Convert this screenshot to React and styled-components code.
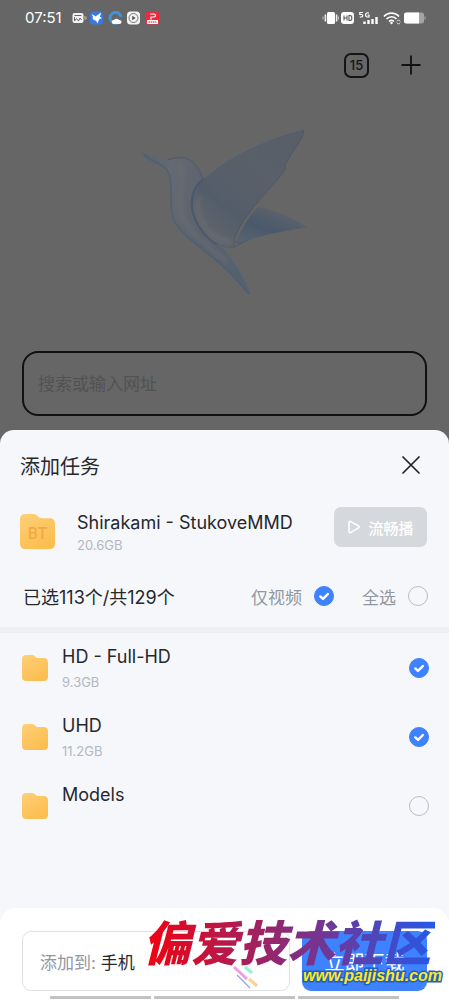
import React, { useState } from 'react';
import styled, { createGlobalStyle } from 'styled-components';

const files = [
  { name: 'HD - Full-HD', size: '9.3GB', checked: true },
  { name: 'UHD', size: '11.2GB', checked: true },
  { name: 'Models', size: '', checked: false },
];

const FolderIcon = (props) => {
  return (
    <FolderSvg $size={props.size} viewBox="0 0 36 36" aria-hidden="true">
      <defs>
        <linearGradient id={props.id} x1="0" y1="0" x2="0.6" y2="1">
          <stop offset="0" stopColor="#ffcf78" />
          <stop offset="1" stopColor="#fcbe50" />
        </linearGradient>
      </defs>
      <path
        d="M6 0h8c2 0 3 1 4.500 2.300C20 3.700 21 4.300 23 4.300h7c4 0 6 2 6 6V30c0 4-2 6-6 6H6c-4 0-6-2-6-6V6c0-4 2-6 6-6z"
        fill={`url(#${props.id})`}
      />
    </FolderSvg>
  );
};

const RoundCheck = (props) => {
  const [checked, setChecked] = useState(props.defaultChecked);
  return (
    <CheckWrap>
      <CheckInput
        type="checkbox"
        id={props.id}
        checked={checked}
        aria-label={props.label}
        onChange={() => setChecked(!checked)}
      />
      {checked && (
        <CheckMark viewBox="0 0 20 20" aria-hidden="true">
          <path d="M6.300 10.400l2.700 2.500 4.900-4.900" />
        </CheckMark>
      )}
    </CheckWrap>
  );
};

const NoticeIcons = () => (
  <svg width="88" height="14" viewBox="0 0 88 14" aria-hidden="true">
    <rect x="0.500" y="2" width="11" height="10" rx="2" fill="#f2f2f2" />
    <path d="M2.500 4.500h7M2.500 6v4l2-2.500L6.500 10l1.500-3 1.500 2" fill="none" stroke="#666" strokeWidth="1" />
    <circle cx="13" cy="7" r="2" fill="#999" />
    <rect x="18" y="0.500" width="13" height="13" rx="3" fill="#3a78e6" />
    <path d="M19.500 3.500c2 .3 3 1 4 2L29 1.500l-1 4.500 2 1-3 1.500-1.500 4-1.500-3c-2.500 0-4-2-3-4z" fill="#fff" />
    <path d="M46.500 11.500a5.500 5.500 0 1 1 2.500-5.500" fill="none" stroke="#3f93dd" strokeWidth="3" />
    <path d="M41.500 13a2 2 0 0 1 .5-4 3 3 0 0 1 5 0 2 2 0 0 1 1 4z" fill="#fff" />
    <rect x="55" y="0.500" width="13" height="13" rx="3.500" fill="#f4f4f4" />
    <circle cx="61.500" cy="7" r="4.500" fill="none" stroke="#777" strokeWidth="1" />
    <path d="M60.200 4.800v4.400l3.500-2.200z" fill="#555" />
    <rect x="74" y="0.500" width="13" height="13" rx="2" fill="#f0283c" />
    <path d="M78 3h4c2 0 2 3 0 3h-3v2.500" fill="none" stroke="#fff" strokeWidth="1.200" />
    <rect x="75" y="9" width="11" height="4" fill="#fff" />
    <path d="M76.500 11h8" stroke="#e65560" strokeWidth="1.500" strokeDasharray="1.500 .6" />
  </svg>
);

const SystemIcons = () => (
  <svg width="104" height="16" viewBox="0 0 104 16" aria-hidden="true">
    <rect x="5" y="2" width="8" height="12" rx="1.500" fill="#fff" />
    <path d="M3.400 4.500v7M14.600 4.500v7" stroke="#eee" strokeWidth="1.600" />
    <path d="M1 6.500v3M16.500 6.500v3" stroke="#bbb" strokeWidth="1" />
    <rect x="19" y="2" width="13" height="12" rx="3" fill="#fff" />
    <path d="M22 5.500v5M25 5.500v5M22 8h3M27 5.500v5h1c2.500 0 2.500-5 0-5z" fill="none" stroke="#555" strokeWidth="1.100" />
    <path d="M41 2.500h-3.200v2h1.400c2 0 2 2.500 0 2.500h-1.500M47 3c-4-1.500-4.500 4-1.500 4h1.500V5h-1.500" fill="none" stroke="#fff" strokeWidth="1.200" />
    <path d="M42.500 14v-2.500M46.500 14v-4M50.500 14V9M54.500 14V7" stroke="#fff" strokeWidth="2.400" />
    <path d="M62 6.500c4-4.500 11-4.500 15 0M64.500 9c3-3 7.500-3 10 0M67 11.500c1.500-1.400 3.500-1.400 5 0" fill="none" stroke="#fff" strokeWidth="1.700" />
    <circle cx="69.500" cy="13" r="1.200" fill="#fff" />
    <path d="M75 11.300l1.500-1.500 1.500 1.500M75 12.700l1.500 1.500 1.500-1.500" fill="none" stroke="#eee" strokeWidth="1" />
    <rect x="82" y="2.500" width="20" height="11" rx="2.500" fill="#a4a4a4" />
    <path d="M84.500 2.500H97v11H84.500c-1.700 0-2.500-.8-2.500-2.500V5c0-1.700.8-2.500 2.500-2.500z" fill="#fff" />
    <path d="M103 6.500v3" stroke="#999" strokeWidth="1.500" />
  </svg>
);

const Hummingbird = () => (
  <svg width="210" height="200" viewBox="0 0 630 600" aria-hidden="true">
    <defs>
      <linearGradient id="body" x1="0" y1="0" x2="1" y2="0.200">
        <stop offset="0" stopColor="#586271" />
        <stop offset="0.300" stopColor="#656a72" />
        <stop offset="0.600" stopColor="#5b636e" />
        <stop offset="1" stopColor="#566170" />
      </linearGradient>
      <linearGradient id="wing" x1="0.100" y1="1" x2="0.900" y2="0">
        <stop offset="0" stopColor="#66686d" />
        <stop offset="0.300" stopColor="#535d6a" />
        <stop offset="0.650" stopColor="#5a6069" />
        <stop offset="1" stopColor="#575e68" />
      </linearGradient>
      <linearGradient id="tail" x1="0" y1="1" x2="0.700" y2="0">
        <stop offset="0" stopColor="#5e6671" />
        <stop offset="0.500" stopColor="#4a596b" />
        <stop offset="1" stopColor="#60656b" />
      </linearGradient>
      <filter id="soft" x="-20%" y="-20%" width="140%" height="140%">
        <feGaussianBlur stdDeviation="6" />
      </filter>
    </defs>
    <path d="M348 400C365 350 390 315 415 290C470 302 520 325 562 352C500 362 430 375 385 390C370 398 360 405 348 412z" fill="url(#tail)" />
    <path
      d="M66 128C90 132 118 148 142 150C185 135 215 145 233 173C242 187 246 197 250 207C220 235 210 265 217 310C225 355 260 395 305 412C345 455 378 505 390 552C383 556 380 548 372 540C340 495 290 455 245 420C205 392 170 360 158 320C148 285 160 235 147 197C143 180 100 162 72 140C66 136 63 130 66 128z"
      fill="url(#body)"
    />
    <path d="M182 158C200 220 165 270 190 325C210 370 270 410 320 455" fill="none" stroke="#6c6f74" strokeWidth="13" opacity="0.600" filter="url(#soft)" />
    <path d="M72 137C110 160 145 168 150 200C158 240 148 290 160 325C180 375 250 415 300 460C340 495 370 535 388 552" fill="none" stroke="#4c5b6e" strokeWidth="5" opacity="0.600" />
    <path d="M142 150C185 135 215 145 233 173L250 205" fill="none" stroke="#4f5a69" strokeWidth="3" />
    <path
      d="M552 57C552 90 512 130 496 165C500 180 485 192 474 207C440 245 370 320 348 380C340 395 344 408 340 413C280 415 230 370 218 310C210 265 225 220 260 200C310 150 430 85 552 57z"
      fill="url(#wing)"
    />
    <path d="M235 260C225 330 265 385 335 398" fill="none" stroke="#717277" strokeWidth="16" opacity="0.450" filter="url(#soft)" />
    <path d="M250 207C210 235 208 290 227 332C240 360 265 390 290 402" fill="none" stroke="#46546a" strokeWidth="6" opacity="0.800" />
    <path d="M290 402C305 409 320 412 340 412" fill="none" stroke="#535e6e" strokeWidth="3" />
    <path d="M552 60C548 95 512 130 496 165C500 180 485 192 474 207C440 245 370 320 345 380L341 412L385 390M345 395l18 5" fill="none" stroke="#434e5d" strokeWidth="2" opacity="0.700" />
    <path d="M260 200C310 150 430 85 552 57" fill="none" stroke="#626974" strokeWidth="3" />
    <path d="M320 430C350 460 375 510 387 548" fill="none" stroke="#566c86" strokeWidth="3" opacity="0.500" />
  </svg>
);

const App = () => {
  return (
    <>
      <GlobalStyle />
      <Page>
        <StatusBar>
          <Clock>07:51</Clock>
          <NoticeIcons />
          <StatusRight>
            <SystemIcons />
          </StatusRight>
        </StatusBar>
        <Toolbar>
          <TabCount type="button">15</TabCount>
          <IconButton type="button" aria-label="新建">
            <svg width="20" height="20" viewBox="0 0 20 20">
              <path d="M10 0.500v19M0.500 10h19" stroke="#111" strokeWidth="1.800" />
            </svg>
          </IconButton>
        </Toolbar>
        <Hero>
          <Hummingbird />
        </Hero>
        <SearchBox type="text" placeholder="搜索或输入网址" aria-label="搜索或输入网址" />

        <Sheet>
          <SheetHeader>
            <SheetTitle>添加任务</SheetTitle>
            <IconButton type="button" aria-label="关闭">
              <svg width="18" height="18" viewBox="0 0 18 18">
                <path d="M1 1l16 16M17 1L1 17" stroke="#222" strokeWidth="1.700" strokeLinecap="round" />
              </svg>
            </IconButton>
          </SheetHeader>

          <Task>
            <TaskIcon>
              <FolderIcon id="folder-task" size={35} />
              <TaskBadge>BT</TaskBadge>
            </TaskIcon>
            <TaskInfo>
              <FileName>Shirakami - StukoveMMD</FileName>
              <FileSize>20.6GB</FileSize>
            </TaskInfo>
            <PlayButton type="button">
              <svg width="14" height="14" viewBox="0 0 14 14" aria-hidden="true">
                <path d="M2 2.300c0-.9.700-1.300 1.500-.9l8 4.600c.8.500.8 1.400 0 1.900l-8 4.700c-.8.400-1.500 0-1.500-.9z" fill="none" stroke="#fff" strokeWidth="1.600" />
              </svg>
              流畅播
            </PlayButton>
          </Task>

          <Selection>
            <Selected>已选113个/共129个</Selected>
            <Option>
              <label htmlFor="only-video">仅视频</label>
              <RoundCheck id="only-video" defaultChecked={true} />
            </Option>
            <Option>
              <label htmlFor="select-all">全选</label>
              <RoundCheck id="select-all" defaultChecked={false} />
            </Option>
          </Selection>

          <FileList>
            {files.map((item, index) => {
              return (
                <FileRow key={item.name}>
                  <FolderIcon id={`folder-${index}`} size={26} />
                  <FileInfo>
                    <FileName>{item.name}</FileName>
                    <FileSize>{item.size}</FileSize>
                  </FileInfo>
                  <RoundCheck id={`file-${index}`} label={item.name} defaultChecked={item.checked} />
                </FileRow>
              );
            })}
          </FileList>

          <Footer>
            <Actions>
              <TargetButton type="button">
                添加到: <Target>手机</Target>
              </TargetButton>
              <DownloadButton type="button">立即下载</DownloadButton>
            </Actions>
            <NavBars>
              <NavBar $grow={5} />
              <NavBar $grow={7} />
              <NavBar $grow={5} />
            </NavBars>
            <Pencils width="28" height="26" viewBox="0 0 28 26" aria-hidden="true">
              <path d="M3 3l13 12" stroke="#ef9be6" strokeWidth="3" />
              <path d="M14 3l7 6" stroke="#9cf0d4" strokeWidth="3.500" />
              <path d="M18 15l8 7" stroke="#f6d79a" strokeWidth="3.500" />
              <path d="M6 11l13 13" stroke="#8fa4ea" strokeWidth="1.200" />
            </Pencils>
            <Brand>偏爱技术社区</Brand>
            <BrandUrl>www.paijishu.com</BrandUrl>
          </Footer>
        </Sheet>
      </Page>
    </>
  );
};

export default App;

const GlobalStyle = createGlobalStyle`
  * {
    box-sizing: border-box;
  }
  body {
    margin: 0;
    background: #666666;
    font-family: Inter, 'Noto Sans CJK SC', sans-serif;
    color: #26282c;
  }
  button, input {
    font-family: inherit;
  }
  svg {
    display: block;
    flex-shrink: 0;
  }
`;

const Page = styled.div`
  display: flex;
  flex-direction: column;
  min-height: 100vh;
`;

const StatusBar = styled.div`
  display: flex;
  align-items: center;
  height: 35px;
  padding: 0 23px 0 25px;
`;

const Clock = styled.span`
  width: 47px;
  font-size: 15px;
  color: #ffffff;
`;

const StatusRight = styled.div`
  margin-left: auto;
`;

const Toolbar = styled.div`
  display: flex;
  justify-content: flex-end;
  align-items: center;
  gap: 26px;
  height: 60px;
  padding: 0 22px;
`;

const TabCount = styled.button`
  width: 25px;
  height: 25px;
  padding: 0;
  border: 2px solid #151515;
  border-radius: 7px;
  background: none;
  font-size: 13px;
  font-weight: 500;
  color: #151515;
`;

const IconButton = styled.button`
  display: flex;
  align-items: center;
  justify-content: center;
  width: 32px;
  height: 32px;
  padding: 0;
  border: none;
  background: none;
`;

const Hero = styled.div`
  display: flex;
  justify-content: center;
  padding: 15px 0 41px;
`;

const SearchBox = styled.input`
  height: 65px;
  margin: 0 22px 14px;
  padding: 0 14px;
  border: 2px solid #111111;
  border-radius: 16px;
  background: none;
  font-size: 17px;
  &::placeholder {
    color: #525252;
    opacity: 1;
  }
`;

const Sheet = styled.section`
  display: flex;
  flex-direction: column;
  flex: 1;
  border-radius: 14px 14px 0 0;
  background: #f5f7fb;
`;

const SheetHeader = styled.div`
  display: flex;
  justify-content: space-between;
  align-items: center;
  height: 70px;
  padding: 0 22px 0 20px;
`;

const SheetTitle = styled.h1`
  margin: 0;
  font-size: 20px;
  font-weight: 400;
`;

const Task = styled.div`
  display: flex;
  align-items: flex-start;
  padding: 7px 22px 10px 20px;
`;

const TaskIcon = styled.div`
  display: grid;
  place-items: center;
  margin: 7px 22px 0 0;
  & > * {
    grid-area: 1 / 1;
  }
`;

const TaskBadge = styled.span`
  padding-top: 4px;
  font-family: 'Roboto', sans-serif;
  font-size: 16px;
  font-weight: 500;
  color: #f0ab44;
`;

const FolderSvg = styled.svg`
  width: ${(props) => props.$size}px;
  height: ${(props) => props.$size}px;
`;

const TaskInfo = styled.div`
  flex: 1;
  padding-top: 4px;
`;

const FileName = styled.div`
  font-size: 18px;
  line-height: 24px;
  white-space: nowrap;
`;

const FileSize = styled.div`
  font-size: 13px;
  line-height: 20px;
  color: #b4b7be;
`;

const PlayButton = styled.button`
  display: flex;
  align-items: center;
  justify-content: center;
  gap: 7px;
  width: 93px;
  height: 40px;
  padding: 0;
  border: none;
  border-radius: 7px;
  background: #d5d8dc;
  font-size: 15px;
  font-weight: 500;
  color: #ffffff;
`;

const Selection = styled.div`
  display: flex;
  align-items: center;
  gap: 28px;
  height: 68px;
  padding: 0 21px 0 23px;
  border-bottom: 6px solid #edeff3;
  font-size: 17px;
`;

const Selected = styled.span`
  flex: 1;
  font-size: 18px;
  white-space: nowrap;
`;

const Option = styled.div`
  display: flex;
  align-items: center;
  gap: 12px;
  white-space: nowrap;
  color: #9298a3;
`;

const CheckWrap = styled.span`
  display: grid;
  place-items: center;
  & > * {
    grid-area: 1 / 1;
  }
`;

const CheckInput = styled.input`
  appearance: none;
  width: 20px;
  height: 20px;
  margin: 0;
  border: 1px solid #b9bcc3;
  border-radius: 50%;
  &:checked {
    border-color: #3f82ff;
    background: #3f82ff;
  }
`;

const CheckMark = styled.svg`
  width: 20px;
  height: 20px;
  fill: none;
  stroke: #ffffff;
  stroke-width: 2.4;
  stroke-linecap: round;
  stroke-linejoin: round;
  pointer-events: none;
`;

const FileList = styled.ul`
  flex: 1;
  margin: 0;
  padding: 11px 20px 0 22px;
  list-style: none;
`;

const FileRow = styled.li`
  display: flex;
  align-items: center;
  height: 69px;
  padding-bottom: 21px;
`;

const FileInfo = styled.div`
  display: flex;
  flex-direction: column;
  flex: 1;
  gap: 3px;
  height: 46px;
  padding-left: 14px;
`;

const Footer = styled.footer`
  position: relative;
  padding: 23px 22px 0;
  border-radius: 16px 16px 0 0;
  background: #ffffff;
`;

const Actions = styled.div`
  display: flex;
  gap: 12px;
`;

const TargetButton = styled.button`
  flex: 1;
  height: 60px;
  padding: 0 17px;
  border: 1px solid #dfe1e5;
  border-radius: 9px;
  background: none;
  font-size: 17px;
  text-align: left;
  color: #9298a3;
`;

const Target = styled.span`
  color: #26282c;
`;

const DownloadButton = styled.button`
  width: 125px;
  height: 60px;
  border: none;
  border-radius: 9px;
  background: #3f82ff;
  font-size: 20px;
  color: #ffffff;
`;

const NavBars = styled.div`
  display: flex;
  gap: 3px;
  padding: 5px 28px 1px;
`;

const NavBar = styled.div`
  flex: ${(props) => props.$grow};
  height: 3px;
  background: #c2c2c2;
`;

const Pencils = styled.svg`
  position: absolute;
  right: 190px;
  bottom: 10px;
`;

const Brand = styled.div`
  position: absolute;
  right: 14px;
  bottom: 24px;
  padding-right: 4px;
  font-size: 48px;
  font-weight: 900;
  font-style: italic;
  line-height: 64px;
  white-space: nowrap;
  color: transparent;
  background: linear-gradient(90deg, #f5000c, #8d2a75 48%, #2558e8);
  background-clip: text;
  pointer-events: none;
`;

const BrandUrl = styled.div`
  position: absolute;
  right: 7px;
  bottom: 14px;
  font-family: 'Liberation Sans', sans-serif;
  font-size: 16px;
  font-weight: 700;
  font-style: italic;
  line-height: 20px;
  color: #ffe81a;
  -webkit-text-stroke: 3px #1d5fd0;
  paint-order: stroke fill;
  pointer-events: none;
`;
